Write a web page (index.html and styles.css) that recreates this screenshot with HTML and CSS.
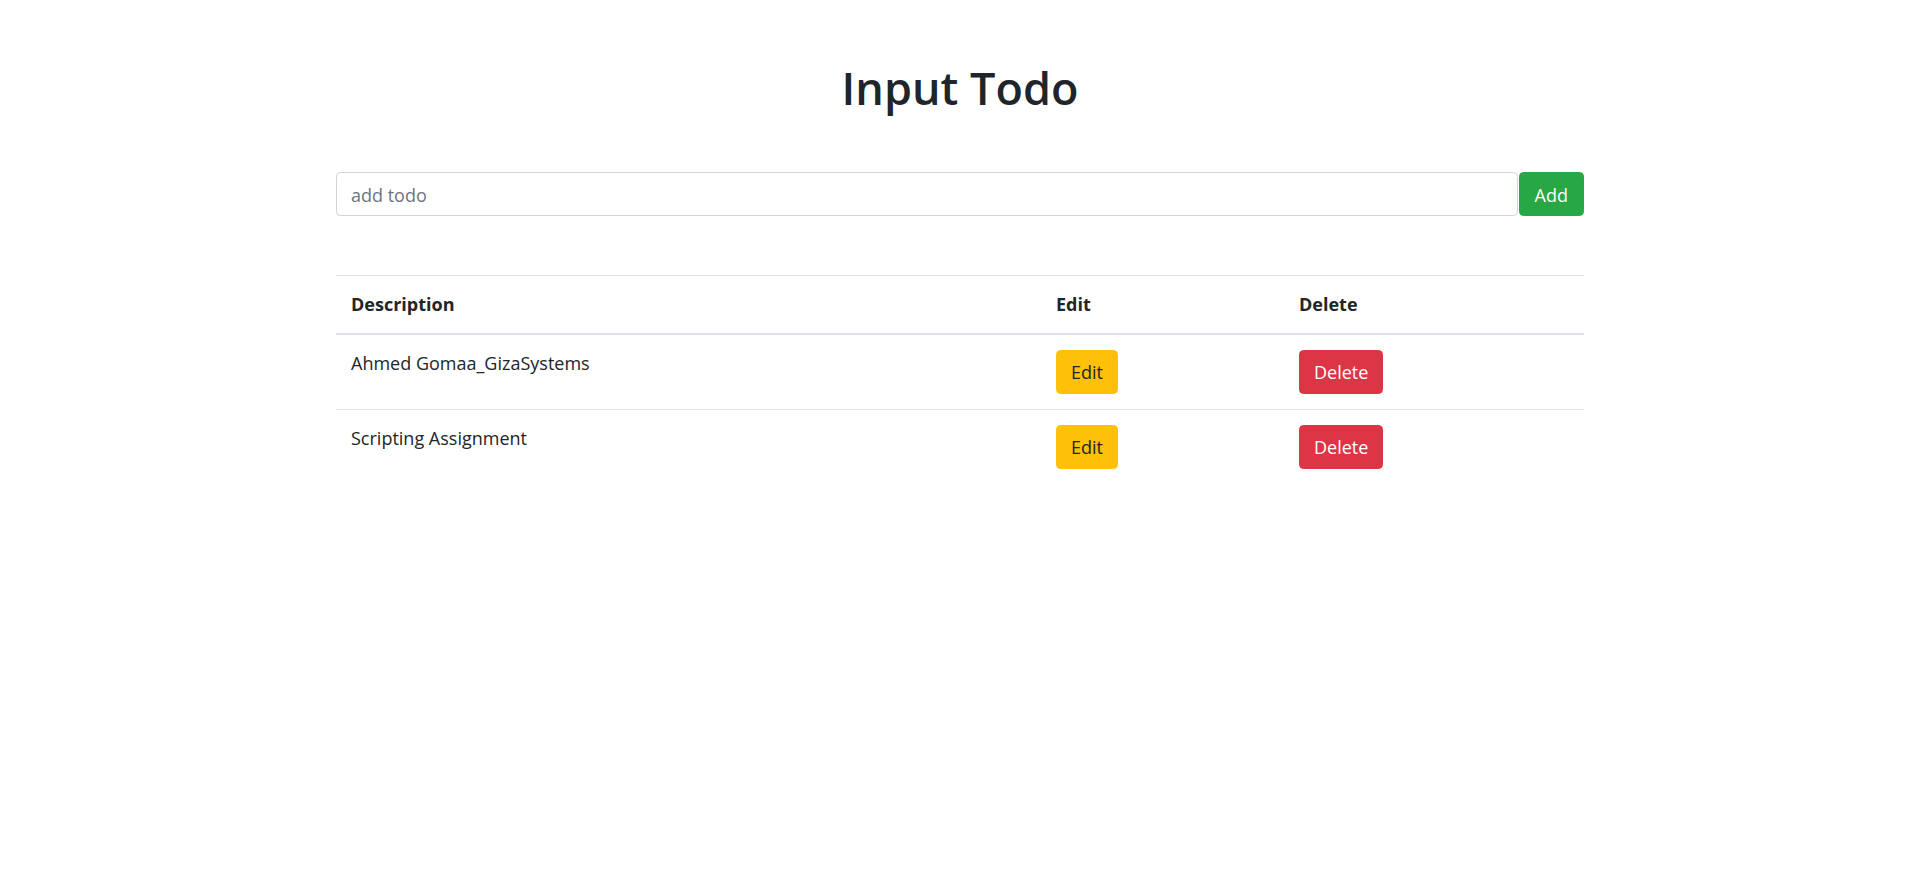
FILE: index.html
```html
<!DOCTYPE html>
<html lang="en">
<head>
<meta charset="utf-8">
<title>Input Todo</title>
<link rel="stylesheet" href="styles.css">
</head>
<body>
<div class="container">
  <h1 class="title">Input Todo</h1>
  <form class="todo-form">
    <input class="todo-input" type="text" placeholder="add todo">
    <button class="btn btn-success" type="button">Add</button>
  </form>
  <table class="todo-table">
    <colgroup>
      <col class="col-desc">
      <col class="col-edit">
      <col class="col-delete">
    </colgroup>
    <thead>
      <tr>
        <th>Description</th>
        <th>Edit</th>
        <th>Delete</th>
      </tr>
    </thead>
    <tbody>
      <tr>
        <td>Ahmed Gomaa_GizaSystems</td>
        <td><button class="btn btn-warning" type="button">Edit</button></td>
        <td><button class="btn btn-danger" type="button">Delete</button></td>
      </tr>
      <tr>
        <td>Scripting Assignment</td>
        <td><button class="btn btn-warning" type="button">Edit</button></td>
        <td><button class="btn btn-danger" type="button">Delete</button></td>
      </tr>
    </tbody>
  </table>
</div>
</body>
</html>
```

FILE: styles.css
```css
* {
  box-sizing: border-box;
}

html, body {
  margin: 0;
  padding: 0;
  background: #ffffff;
}

body {
  font-family: "Open Sans", "Noto Sans", sans-serif;
  font-size: 18px;
  line-height: 27px;
  color: #212529;
}

.container {
  width: 1248px;
  margin: 0 auto;
}

.title {
  margin: 60px 0 0;
  font-size: 45px;
  line-height: 55px;
  font-weight: 600;
  text-align: center;
  color: #212529;
}

.todo-form {
  display: flex;
  gap: 1px;
  margin-top: 57px;
}

.todo-input {
  flex: 1;
  height: 44px;
  padding: 2px 14px 0;
  font-family: inherit;
  font-size: 18px;
  color: #495057;
  border: 1px solid #ced4da;
  border-radius: 4.5px;
  outline: none;
  background: #fff;
}

.todo-input::placeholder {
  color: #6c757d;
  opacity: 1;
}

.btn {
  display: inline-block;
  font-family: inherit;
  font-size: 18px;
  line-height: 27px;
  padding: 8px 14px 7px;
  border: 1px solid transparent;
  border-radius: 4.5px;
  cursor: pointer;
  vertical-align: top;
}

.btn-success {
  background: #28a745;
  border-color: #28a745;
  color: #fff;
  padding: 9px 15px 6px;
}

.btn-warning {
  background: #ffc107;
  border-color: #ffc107;
  color: #212529;
}

.btn-danger {
  background: #dc3545;
  border-color: #dc3545;
  color: #fff;
}

.todo-table {
  width: 100%;
  margin-top: 59px;
  border-collapse: collapse;
  table-layout: fixed;
}

.col-desc {
  width: 705px;
}

.col-edit {
  width: 243px;
}

.col-delete {
  width: 300px;
}

.todo-table th,
.todo-table td {
  padding: 15px;
  text-align: left;
  vertical-align: top;
  border-top: 1px solid #dee2e6;
}

.todo-table th {
  font-weight: 700;
  border-bottom: 2px solid #dee2e6;
}
```
